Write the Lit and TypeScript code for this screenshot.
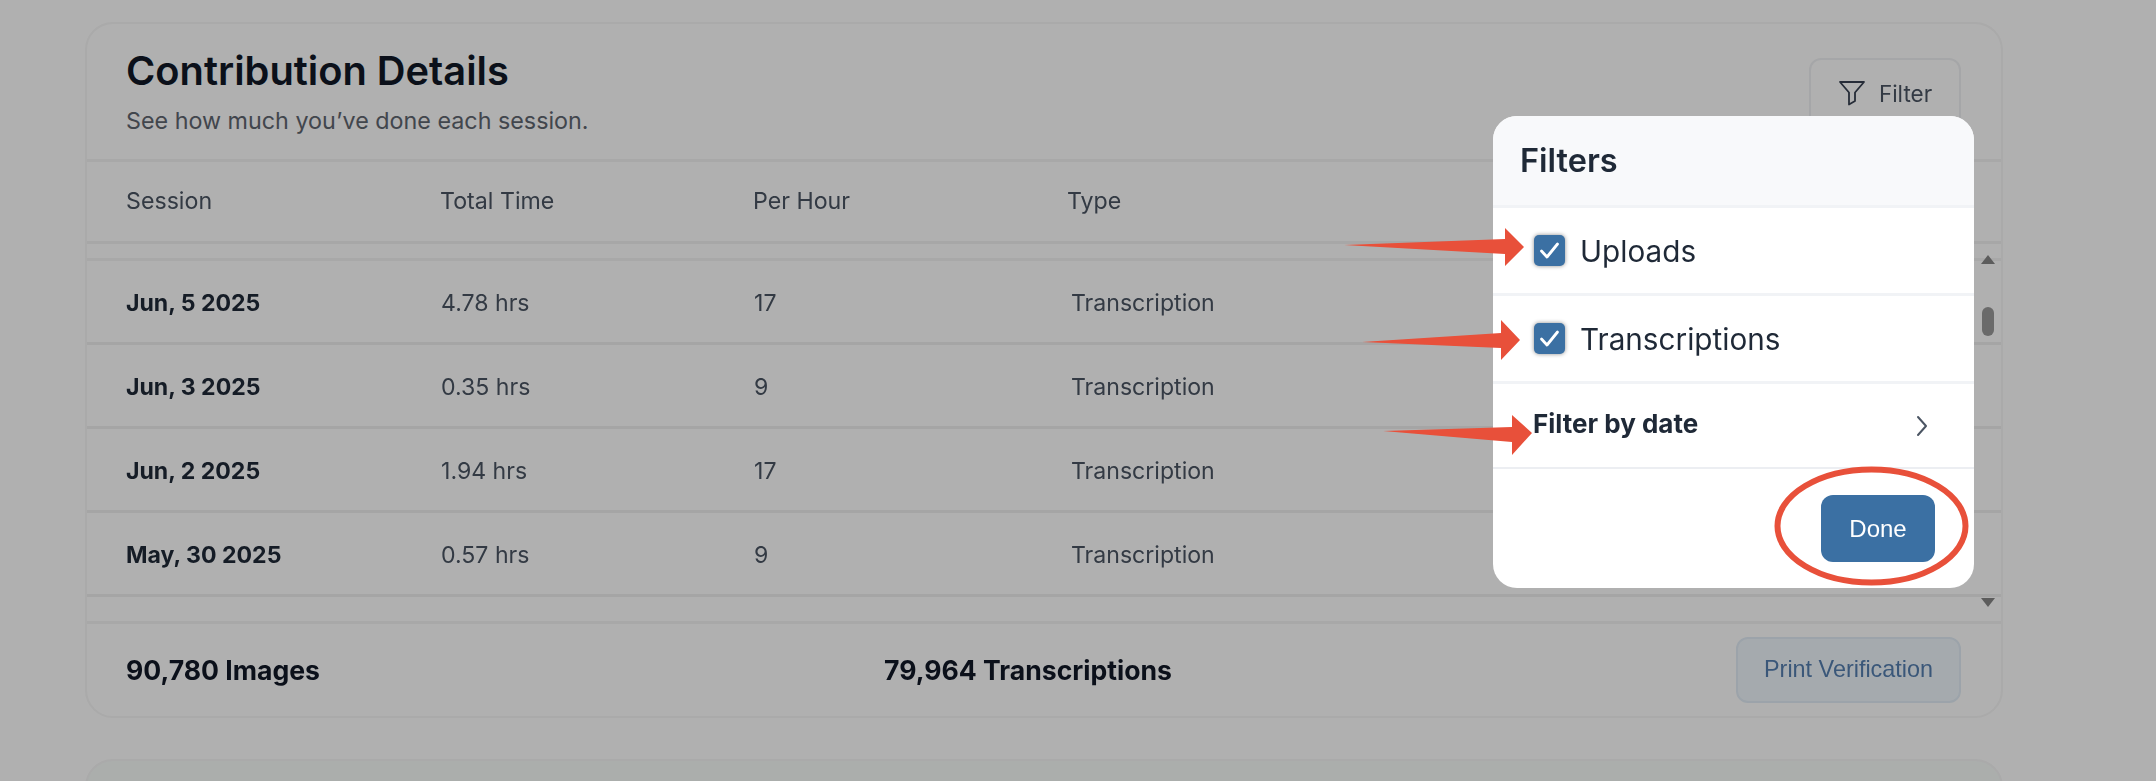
import { LitElement, html, css, svg } from "lit";
import { customElement } from "lit/decorators.js";

const rows = [
  ["Jun, 5 2025", "4.78 hrs", "17", "Transcription"],
  ["Jun, 3 2025", "0.35 hrs", "9", "Transcription"],
  ["Jun, 2 2025", "1.94 hrs", "17", "Transcription"],
  ["May, 30 2025", "0.57 hrs", "9", "Transcription"],
];

const check = html`<span class="box"><svg width="31" height="31" viewBox="0 0 31 31" fill="none"><path d="M7.5 16l5.5 6 10.5-13" stroke="#fff" stroke-width="2.8" stroke-linecap="round" stroke-linejoin="round"/></svg></span>`;

@customElement("app-root")
export class AppRoot extends LitElement {
  static styles = css`
    :host { display: block; position: relative; width: 2156px; height: 781px; overflow: hidden; background: #fff; font-family: Inter, "Noto Sans", sans-serif; color: #111827; }
    .page { padding: 22px 153px 0 85px; display: flex; flex-direction: column; gap: 41px; filter: blur(0.7px); }
    .card { border: 2px solid #f6f6f6; border-radius: 28px; background: #fff; }
    .second { height: 120px; background: #f8fcfa; }
    .head { height: 135px; padding: 0 40px 0 39px; display: flex; justify-content: space-between; border-bottom: 3px solid #f4f4f4; }
    h1 { margin: 22px 0 0; font-size: 39.8px; line-height: 50px; font-weight: 600; }
    .sub { margin: 10px 0 0; font-size: 23.3px; line-height: 30px; color: #5f6670; }
    .filter { margin-top: 34px; width: 152px; height: 72px; box-sizing: border-box; border: 2px solid #f0f1f3; border-radius: 12px; display: flex; align-items: center; justify-content: center; gap: 13px; font-size: 22.5px; color: #4b5563; padding-bottom: 2px; background: #fff; }
    .thead, .row { display: grid; padding-left: 39px; align-items: center; }
    .thead { grid-template-columns: 314px 313px 314px 1fr; height: 81.5px; padding-bottom: 1px; box-sizing: border-box; border-bottom: 3px solid #f2f2f2; font-size: 23.2px; color: #4b5563; margin-bottom: 14px; }
    .rows { border-top: 3px solid #f4f4f4; }
    .row { grid-template-columns: 315px 313px 317px 1fr; height: 78px; padding-top: 3px; border-bottom: 3px solid #f0f0f0; font-size: 23.1px; color: #4b5563; }
    .row b { font-weight: 700; color: #1f2937; }
    .foot { margin-top: 24px; border-top: 3px solid #f4f4f4; height: 92px; padding: 0 40px 0 39px; display: flex; align-items: center; font-size: 26.6px; font-weight: 700; }
    .foot .a { width: 758px; }
    .print { margin-left: auto; width: 225px; height: 66px; box-sizing: border-box; border: 2px solid #e2edf6; border-radius: 12px; background: #f0f7fd; color: #557fb0; font: 400 23.4px "Liberation Sans", sans-serif; display: flex; align-items: center; justify-content: center; }
    .scrim { position: absolute; inset: 0; background: rgba(0, 0, 0, 0.31); }
    .scroll { position: absolute; left: 1980px; top: 255px; width: 16px; height: 354px; filter: blur(0.5px); }
    .popup { position: absolute; left: 1493px; top: 116px; width: 481px; height: 472px; border-radius: 24px; background: #fff; overflow: hidden; color: #1f2937; filter: blur(0.6px); }
    .ptitle { height: 89px; padding-left: 27px; display: flex; align-items: center; background: #f8f9fb; border-bottom: 3px solid #f1f3f6; font-size: 32.5px; font-weight: 600; }
    .opt { height: 85px; padding-left: 41px; display: flex; align-items: center; gap: 15px; border-bottom: 3px solid #f1f3f6; font-size: 29.7px; font-weight: 400; }
    .box { width: 31px; height: 31px; background: #3b70a3; border-radius: 5px; box-shadow: 0 0 4px rgba(0,0,0,.45); display: block; }
    .box svg { display: block; }
    .date { height: 83px; padding: 0 45px 0 40px; display: flex; align-items: center; justify-content: space-between; border-bottom: 2px solid #eceef2; font-size: 26px; font-weight: 700; }
    .date span { margin-top: -4px; }
    .pfoot { display: flex; justify-content: flex-end; padding: 26px 39px 0 0; }
    .done { width: 114px; height: 67px; background: #3b70a3; border-radius: 12px; color: #fff; font: 400 24px "Liberation Sans", sans-serif; display: flex; align-items: center; justify-content: center; }
    .marks { position: absolute; inset: 0; pointer-events: none; }
  `;

  render() {
    return html`
      <div class="page">
        <section class="card">
          <div class="head">
            <div>
              <h1>Contribution Details</h1>
              <p class="sub">See how much you’ve done each session.</p>
            </div>
            <div class="filter">
              <svg width="28" height="26" viewBox="0 0 28 26" fill="none" stroke="#374151" stroke-width="1.8" stroke-linejoin="round"><path d="M2 2h24L17 12.5V21l-6 3.5v-12z"/></svg>
              Filter
            </div>
          </div>
          <div class="thead"><span>Session</span><span>Total Time</span><span>Per Hour</span><span>Type</span></div>
          <div class="rows">
            ${rows.map((r) => html`<div class="row"><b>${r[0]}</b><span>${r[1]}</span><span>${r[2]}</span><span>${r[3]}</span></div>`)}
          </div>
          <div class="foot">
            <span class="a">90,780 Images</span><span>79,964 Transcriptions</span>
            <span class="print">Print Verification</span>
          </div>
        </section>
        <section class="card second"></section>
      </div>
      <div class="scrim"></div>
      <svg class="scroll" viewBox="0 0 16 354">
        <path d="M8 0L15 9H1z" fill="#5c5c5c"/>
        <rect x="2" y="52" width="12" height="29" rx="6" fill="#6a6a6a"/>
        <path d="M8 352L15 343H1z" fill="#5c5c5c"/>
      </svg>
      <div class="popup">
        <div class="ptitle">Filters</div>
        <div class="opt">${check}<span>Uploads</span></div>
        <div class="opt">${check}<span>Transcriptions</span></div>
        <div class="date">
          <span>Filter by date</span>
          <svg width="14" height="22" viewBox="0 0 14 22" fill="none" stroke="#4b5563" stroke-width="2" stroke-linecap="round" stroke-linejoin="round"><path d="M3 2l8 9-8 9"/></svg>
        </div>
        <div class="pfoot"><div class="done">Done</div></div>
      </div>
      <svg class="marks" width="2156" height="781" viewBox="0 0 2156 781">
        ${svg`
          <path d="M1344 245L1505 239V228L1524 247L1505 266V254Z" fill="#e8503a"/>
          <path d="M1362 342L1501 333V320L1520 340L1501 360V348Z" fill="#e8503a"/>
          <path d="M1383 431L1512 427V415L1532 433L1512 455V442Z" fill="#e8503a"/>
          <ellipse cx="1871.5" cy="526" rx="94" ry="56.5" fill="none" stroke="#e8503a" stroke-width="6"/>
        `}
      </svg>
    `;
  }
}
